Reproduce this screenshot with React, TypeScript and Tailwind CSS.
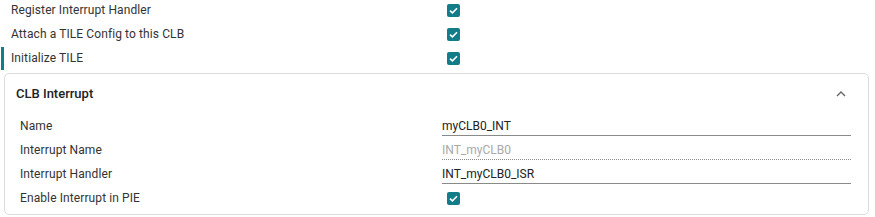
import React from "react";

function Check() {
  return (
    <div className="w-[13px] h-[13px] rounded-[2px] bg-[#127c88] flex items-center justify-center">
      <svg width="9" height="7" viewBox="0 0 9 7" fill="none">
        <path d="M1 3.6 L3.4 5.8 L8 1.2" stroke="white" strokeWidth="1.6" />
      </svg>
    </div>
  );
}

function TopRow({ label, active }: { label: string; active?: boolean }) {
  return (
    <div className="h-6 flex items-center">
      <div className={"w-[3px] h-[23px] ml-[1px] " + (active ? "bg-[#127c88]" : "")} />
      <div className="w-[443px] pl-[7px] text-[12px] tracking-[0.1px] text-[#333]">{label}</div>
      <Check />
    </div>
  );
}

function Field({ label, value, disabled }: { label: string; value: string; disabled?: boolean }) {
  return (
    <div className="h-6 flex items-start">
      <div className="w-[422px] h-6 flex items-center text-[12px] tracking-[0.1px] text-[#333]">{label}</div>
      <div
        className={
          "w-[409px] h-[22px] pt-[5px] leading-[15px] text-[12px] " +
          (disabled
            ? "text-[#a9a9a9] border-b border-dotted border-[#8a8a8a]"
            : "text-[#222] border-b border-[#8a8a8a]")
        }
      >
        {value}
      </div>
    </div>
  );
}

export default function App() {
  return (
    <div className="w-[875px] h-[217px] bg-white overflow-hidden font-['Roboto',sans-serif]">
      <div className="-mt-[2px]">
        <TopRow label="Register Interrupt Handler" />
        <TopRow label="Attach a TILE Config to this CLB" />
        <TopRow label="Initialize TILE" active />
      </div>
      <div className="ml-[4px] mt-[3px] w-[865px] h-[142px] border border-[#dcdcdc] rounded-[5px]">
        <div className="h-[40px] flex items-center justify-between pl-[11px] pr-[22px]">
          <div className="text-[13px] font-medium text-[#222]">CLB Interrupt</div>
          <svg width="10" height="6" viewBox="0 0 10 6" fill="none">
            <path d="M1 5 L5 1 L9 5" stroke="#666" strokeWidth="1.4" />
          </svg>
        </div>
        <div className="pl-[15px]">
          <Field label="Name" value="myCLB0_INT" />
          <Field label="Interrupt Name" value="INT_myCLB0" disabled />
          <Field label="Interrupt Handler" value="INT_myCLB0_ISR" />
          <div className="h-6 flex items-center">
            <div className="w-[427px] text-[12px] tracking-[0.1px] text-[#333]">Enable Interrupt in PIE</div>
            <Check />
          </div>
        </div>
      </div>
    </div>
  );
}
